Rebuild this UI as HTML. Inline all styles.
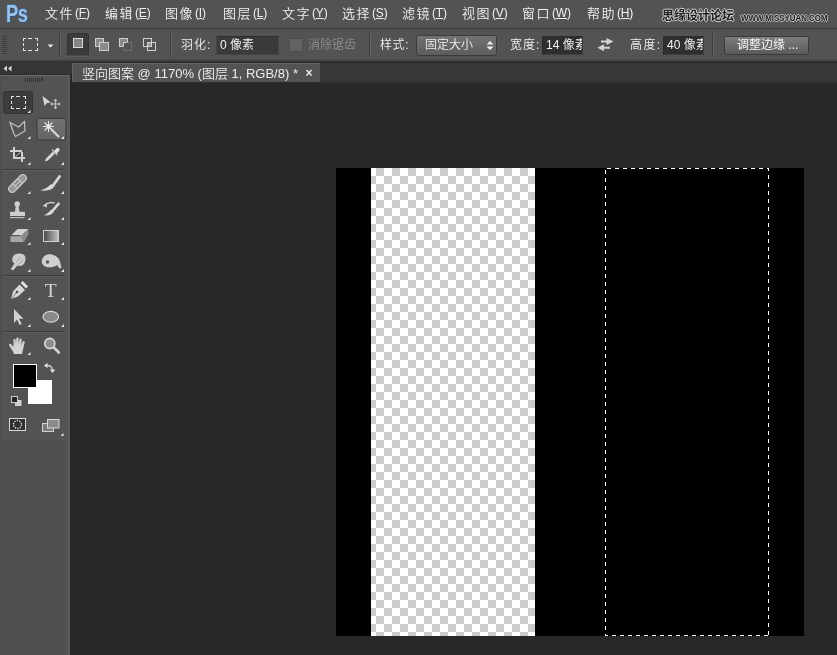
<!DOCTYPE html>
<html lang="zh-CN">
<head>
<meta charset="utf-8">
<title>竖向图案</title>
<style>
*{box-sizing:border-box;margin:0;padding:0}
html,body{width:837px;height:655px;overflow:hidden;background:#282828}
body{position:relative;font-family:"Liberation Sans","Noto Sans CJK SC",sans-serif;font-size:13px;color:#e8e8e8;font-weight:350}
.abs{position:absolute}
#menubar,#optbar,#tabbar{will-change:transform}
#menubar{left:0;top:0;width:837px;height:28px;background:#535353}
#menubar .mi{position:absolute;top:4px;height:20px;line-height:20px;font-size:13px;color:#f0f0f0;white-space:nowrap;letter-spacing:1.5px;margin-left:-1px}
#menubar .mi .k{font-size:12px;letter-spacing:-.2px;margin-left:1px;position:relative;top:-1px}
#menubar .mi u{text-decoration:underline;text-underline-offset:1px}
#logo{position:absolute;left:6px;top:1px;font-size:23.5px;font-weight:bold;color:#9cc2e6;letter-spacing:-.5px;line-height:26px;text-shadow:1px 1px 0 #2f5688,-1px 0 0 #3a6496,0 -1px 0 #41699a;transform-origin:0 0;transform:scaleX(.78)}
#wm1{position:absolute;left:662px;top:7px;font-size:12px;line-height:18px;color:#1e1e1e;font-weight:bold;white-space:nowrap;text-shadow:1px 0 0 #cfcfcf,-1px 0 0 #cfcfcf,0 1px 0 #cfcfcf,0 -1px 0 #cfcfcf}
#wm2{position:absolute;left:741px;top:13px;font-size:8.5px;line-height:10px;color:#1e1e1e;font-weight:bold;white-space:nowrap;letter-spacing:0;transform-origin:0 0;transform:scaleX(.93);text-shadow:1px 0 0 #bdbdbd,-1px 0 0 #bdbdbd,0 1px 0 #bdbdbd,0 -1px 0 #bdbdbd}
#optbar{left:0;top:28px;width:837px;height:35px;background:linear-gradient(#535353,#535353 30px,#494949 31px,#3c3c3c 32px,#2a2a2a 33px,#2a2a2a);border-top:1px solid #383838}
#optbar .lbl{position:absolute;font-size:12px;line-height:16px;color:#efefef;white-space:nowrap}
#optbar .inp{position:absolute;top:7px;height:19px;background:#3a3a3a;border:1px solid #454545;border-top-color:#2e2e2e;color:#f2f2f2;font-size:12px;line-height:17px;padding-left:3px;white-space:nowrap;overflow:hidden}
.vsep{position:absolute;top:4px;width:2px;height:24px;border-left:1px solid #3c3c3c;border-right:1px solid #626262}
#tabbar{left:72px;top:63px;width:765px;height:21px;background:linear-gradient(#393939 0,#383838 11px,#3b3b3b 14px,#383838 17px,#2c2c2c 20px,#282828 21px)}
#tab{position:absolute;left:0;top:0;width:248px;height:19px;background:#535353;border-left:1px solid #626262;border-top:1px solid #626262;font-size:13px;line-height:20px;color:#ececec;white-space:nowrap}
#tools{left:0;top:62px;width:70px;height:593px;background:#535353;border-right:1px solid #444}
#thead{position:absolute;left:0;top:0;width:72px;height:12px;background:#353535}
</style>
</head>
<body>
<div id="menubar" class="abs">
  <div id="logo">Ps</div>
  <div class="mi" style="left:46px">文件<span class="k">(<u>F</u>)</span></div>
  <div class="mi" style="left:106px">编辑<span class="k">(<u>E</u>)</span></div>
  <div class="mi" style="left:166px">图像<span class="k">(<u>I</u>)</span></div>
  <div class="mi" style="left:224px">图层<span class="k">(<u>L</u>)</span></div>
  <div class="mi" style="left:283px">文字<span class="k">(<u>Y</u>)</span></div>
  <div class="mi" style="left:343px">选择<span class="k">(<u>S</u>)</span></div>
  <div class="mi" style="left:403px">滤镜<span class="k">(<u>T</u>)</span></div>
  <div class="mi" style="left:463px">视图<span class="k">(<u>V</u>)</span></div>
  <div class="mi" style="left:523px">窗口<span class="k">(<u>W</u>)</span></div>
  <div class="mi" style="left:588px">帮助<span class="k">(<u>H</u>)</span></div>
  <div id="wm1">思缘设计论坛</div>
  <div id="wm2">WWW.MISSYUAN.COM</div>
</div>

<div id="optbar" class="abs">
  <svg class="abs" style="left:0;top:-1px" width="837" height="33" viewBox="0 28 837 33">
    <!-- gripper -->
    <g fill="#3e3e3e"><rect x="2" y="35" width="5" height="1"/><rect x="2" y="37" width="5" height="1"/><rect x="2" y="39" width="5" height="1"/><rect x="2" y="41" width="5" height="1"/><rect x="2" y="43" width="5" height="1"/><rect x="2" y="45" width="5" height="1"/><rect x="2" y="47" width="5" height="1"/><rect x="2" y="49" width="5" height="1"/><rect x="2" y="51" width="5" height="1"/><rect x="2" y="53" width="5" height="1"/></g>
    <!-- current tool: marquee -->
    <g fill="#e4e4e4" shape-rendering="crispEdges">
      <rect x="23" y="38" width="3" height="1"/><rect x="28" y="38" width="4" height="1"/><rect x="35" y="38" width="3" height="1"/>
      <rect x="23" y="50" width="3" height="1"/><rect x="28" y="50" width="4" height="1"/><rect x="35" y="50" width="3" height="1"/>
      <rect x="23" y="38" width="1" height="3"/><rect x="23" y="43" width="1" height="3"/><rect x="23" y="48" width="1" height="3"/>
      <rect x="37" y="38" width="1" height="3"/><rect x="37" y="43" width="1" height="3"/><rect x="37" y="48" width="1" height="3"/>
    </g>
    <path d="M47.5 44.5h6l-3 3z" fill="#ececec"/>
    <!-- selected mode button -->
    <rect x="67.5" y="33.5" width="21" height="22" rx="1.5" fill="#3b3b3b" stroke="#333" stroke-width="1"/>
    <rect x="68" y="55.5" width="20" height="1" fill="#666"/>
    <rect x="73.5" y="38.5" width="9" height="9" fill="#858585" stroke="#d8d8d8"/>
    <!-- add -->
    <rect x="95.5" y="38.5" width="8" height="8" fill="#8a8a8a" stroke="#d0d0d0"/>
    <rect x="99.5" y="42.5" width="9" height="8" fill="#8a8a8a" stroke="#d0d0d0"/>
    <rect x="100" y="43" width="3" height="3" fill="#8a8a8a"/>
    <!-- subtract -->
    <rect x="119.5" y="38.5" width="8" height="8" fill="#8a8a8a" stroke="#d0d0d0"/>
    <rect x="123.5" y="42.5" width="8" height="8" fill="#535353" stroke="#6e6e6e"/>
    <path d="M123.5 46.5v-4h4" fill="none" stroke="#d0d0d0"/>
    <!-- intersect -->
    <rect x="143.500" y="38.500" width="8" height="8" fill="none" stroke="#d0d0d0"/>
    <rect x="147.500" y="42.500" width="8" height="8" fill="none" stroke="#d0d0d0"/>
    <rect x="148" y="43" width="3" height="3" fill="#9a9a9a"/>
    <!-- checkbox disabled -->
    <rect x="289.500" y="38.500" width="13" height="13" rx="1" fill="#626262" stroke="#4b4b4b"/>
    <!-- style dropdown -->
    <defs><linearGradient id="btn2" x1="0" y1="0" x2="0" y2="1"><stop offset="0" stop-color="#7e7e7e"/><stop offset="1" stop-color="#5a5a5a"/></linearGradient><linearGradient id="btn" x1="0" y1="0" x2="0" y2="1"><stop offset="0" stop-color="#737373"/><stop offset="1" stop-color="#5c5c5c"/></linearGradient></defs>
    <rect x="416.500" y="35.500" width="80" height="20" rx="2" fill="url(#btn)" stroke="#3a3a3a"/>
    <path d="M486.500 44.500l3.500-3.500 3.500 3.500zM486.500 46.500l3.500 3.500 3.500-3.500z" fill="#f0f0f0"/>
    <!-- swap icon -->
    <g fill="#d2d2d2"><path d="M601 40.500h5.500v-2.500l7 3.500-7 3.500v-2.500H601z"/><path d="M610 46.700h-6v-2.500l-6.500 3.500 6.500 3.500v-2.500h6z"/></g>
    <!-- refine edge button -->
    <rect x="724.500" y="36.500" width="84" height="18" rx="2" fill="url(#btn2)" stroke="#3a3a3a"/>
  </svg>
  <div class="vsep" style="left:59px"></div>
  <div class="vsep" style="left:170px"></div>
  <div class="vsep" style="left:369px"></div>
  <div class="vsep" style="left:712px"></div>
  <div class="lbl" style="left:181px;top:8px;letter-spacing:1px">羽化:</div>
  <div class="inp" style="left:216px;width:63px">0 像素</div>
  <div class="lbl" style="left:308px;top:8px;color:#8d8d8d;font-size:12px">消除锯齿</div>
  <div class="lbl" style="left:380px;top:8px;letter-spacing:.6px">样式:</div>
  <div class="lbl" style="left:425px;top:8px">固定大小</div>
  <div class="lbl" style="left:737px;top:8px;font-size:12px;font-weight:400;color:#f6f6f6">调整边缘 ...</div>
  <div class="lbl" style="left:510px;top:8px;letter-spacing:1px">宽度:</div>
  <div class="inp" style="left:542px;width:41px;background:#2f2f2f;border-color:#2a2a2a #3e3e3e #3e3e3e #2a2a2a">14 像素</div>
  <div class="lbl" style="left:630px;top:8px;letter-spacing:1.4px">高度:</div>
  <div class="inp" style="left:663px;width:41px;background:#2f2f2f;border-color:#2a2a2a #3e3e3e #3e3e3e #2a2a2a">40 像素</div>
</div>

<div id="tabbar" class="abs">
  <div id="tab"><span style="position:absolute;left:9px;top:0">竖向图案 @ 1170% (图层 1, RGB/8) *</span><span style="position:absolute;left:232.5px;top:-1px;font-size:12px;font-weight:bold">×</span></div>
</div>

<div id="tools" class="abs">
  <div id="thead"></div>
</div>
<!--TOOLS-->
<svg class="abs" style="left:0;top:62px;will-change:transform" width="72" height="593" viewBox="0 62 72 593">
  <defs>
    <linearGradient id="gradtool" x1="0" y1="0" x2="1" y2="0"><stop offset="0" stop-color="#484848"/><stop offset="1" stop-color="#c2c2c2"/></linearGradient>
    <linearGradient id="hov" x1="0" y1="0" x2="0" y2="1"><stop offset="0" stop-color="#737373"/><stop offset="1" stop-color="#646464"/></linearGradient>
    <path id="tri" d="M0 3h3v-3z" fill="#e6e6e6"/>
  </defs>
  <rect x="0" y="440" width="67" height="215" fill="#4f4f4f"/><rect x="0" y="76" width="2" height="579" fill="#4f4f4f"/><rect x="67" y="76" width="3" height="579" fill="#595959"/>
  <!-- panel header / collapse arrows -->
  <path d="M3.500 68.500l3.500-3v6zM8 68.500l3.500-3v6z" fill="#d8d8d8"/>
  <rect x="0" y="74" width="70" height="1" fill="#2f2f2f"/>
  <rect x="0" y="75" width="70" height="1" fill="#656565"/>
  <!-- grip -->
  <g fill="#333"><rect x="25" y="78" width="1" height="4"/><rect x="27" y="78" width="1" height="4"/><rect x="29" y="78" width="1" height="4"/><rect x="31" y="78" width="1" height="4"/><rect x="33" y="78" width="1" height="4"/><rect x="35" y="78" width="1" height="4"/><rect x="37" y="78" width="1" height="4"/><rect x="39" y="78" width="1" height="4"/><rect x="41" y="78" width="2" height="3"/></g>
  <!-- separators -->
  <g><rect x="3" y="169" width="63" height="1" fill="#3d3d3d"/><rect x="3" y="170" width="63" height="1" fill="#5f5f5f"/>
     <rect x="3" y="275" width="63" height="1" fill="#3d3d3d"/><rect x="3" y="276" width="63" height="1" fill="#5f5f5f"/>
     <rect x="3" y="331" width="63" height="1" fill="#3d3d3d"/><rect x="3" y="332" width="63" height="1" fill="#5f5f5f"/></g>

  <!-- row1: marquee (selected) -->
  <rect x="3.500" y="91.500" width="29" height="22" rx="2.500" fill="#3c3c3c" stroke="#343434"/>
  <g fill="#e2e2e2" shape-rendering="crispEdges">
    <rect x="11" y="96" width="3" height="1"/><rect x="16" y="96" width="4" height="1"/><rect x="23" y="96" width="3" height="1"/>
    <rect x="11" y="108" width="3" height="1"/><rect x="16" y="108" width="4" height="1"/><rect x="23" y="108" width="3" height="1"/>
    <rect x="11" y="96" width="1" height="3"/><rect x="11" y="101" width="1" height="3"/><rect x="11" y="106" width="1" height="3"/>
    <rect x="25" y="96" width="1" height="3"/><rect x="25" y="101" width="1" height="3"/><rect x="25" y="106" width="1" height="3"/>
  </g>
  <use href="#tri" x="27.500" y="110"/>
  <!-- move -->
  <path d="M42.500 96l2 10 2.300-3 4.200-.6z" fill="#d6d6d6"/>
  <g stroke="#c6c6c6" stroke-width="1.200" fill="#c6c6c6"><path d="M51.500 104h8M55.500 100v8" fill="none"/><path d="M55.500 98.800l2 2.200h-4zM55.500 109.200l2-2.200h-4zM50.300 104l2.200-2v4zM60.700 104l-2.200-2v4z" stroke="none"/></g>

  <!-- row2: polygonal lasso -->
  <path d="M10 122.500l8.500 4.500 6-5.500.5 9.500-9.500 5.500-1.500-2.500zM15.500 136.500l-1.500-2.500-3.500-10" fill="none" stroke="#c4c4c4" stroke-width="1.200" stroke-linejoin="miter"/>
  <use href="#tri" x="27.500" y="136"/>
  <!-- wand (hover) -->
  <rect x="37" y="118.500" width="29" height="21.500" rx="2" fill="url(#hov)" stroke="#3a3a3a"/>
  <g stroke="#e4e4e4" stroke-width="1.100" fill="none"><path d="M43 126.500h11M48.500 121v11M44.500 122.500l8 8M52.500 122.500l-8 8"/></g>
  <circle cx="48.500" cy="126.500" r="2.300" fill="#e8e8e8"/>
  <path d="M51 129l8 8" stroke="#d8d8d8" stroke-width="2.200" fill="none"/>
  <use href="#tri" x="61" y="136"/>

  <!-- row3: crop -->
  <g fill="#d0d0d0"><rect x="13" y="147" width="2" height="12"/><rect x="10" y="150" width="12" height="2"/><rect x="21" y="152" width="2" height="10"/><rect x="15" y="157" width="10" height="2"/></g>
  <rect x="15" y="152" width="6" height="5" fill="#3f3f3f"/><path d="M15.500 156.500l5-4" stroke="#bdbdbd" stroke-width="1"/>
  <use href="#tri" x="27.500" y="162"/>
  <!-- eyedropper -->
  <path d="M45 161.500l1-3 7-7 2 2-7 7z" fill="#d8d8d8"/>
  <path d="M52 149.500l5.500 5.500" stroke="#bdbdbd" stroke-width="1.600"/>
  <path d="M54 151l2.500-2.500a1.800 1.800 0 0 1 2.600 2.600L56.500 153.500z" fill="#e0e0e0"/>
  <use href="#tri" x="61" y="162"/>

  <!-- row4: healing brush (bandage) -->
  <g transform="rotate(-45 17.500 183.500)"><rect x="6.500" y="180" width="22" height="7" rx="3.500" fill="#9a9a9a" stroke="#cfcfcf" stroke-width="1.100"/><rect x="13" y="180.500" width="9" height="6" fill="#bcbcbc"/><g fill="#555"><circle cx="15.500" cy="182" r=".7"/><circle cx="17.500" cy="182" r=".7"/><circle cx="19.500" cy="182" r=".7"/><circle cx="15.500" cy="185" r=".7"/><circle cx="17.500" cy="185" r=".7"/><circle cx="19.500" cy="185" r=".7"/></g></g>
  <use href="#tri" x="27.500" y="191"/>
  <!-- brush -->
  <path d="M59.500 176.500l-6 8.500" stroke="#d6d6d6" stroke-width="2.800" stroke-linecap="round"/>
  <path d="M51.300 184l3 2.300c-2 4-7.500 5-14 4 5-1.200 7-2.800 11-6.300z" fill="#dadada"/>
  <use href="#tri" x="61" y="191"/>

  <!-- row5: stamp -->
  <circle cx="17.200" cy="204" r="2.700" fill="#d0d0d0"/>
  <path d="M15.800 205.500h2.800l.9 6.500h-4.600z" fill="#c8c8c8"/>
  <rect x="10" y="211.800" width="15" height="4.200" fill="#cecece"/>
  <rect x="10" y="217" width="14.500" height="1.200" fill="#bcbcbc"/>
  <use href="#tri" x="27.500" y="217"/>
  <!-- history brush -->
  <path d="M58.500 203.800l-6 7" stroke="#d6d6d6" stroke-width="2.700" stroke-linecap="round"/>
  <path d="M51 209.800l2.600 2.200c-2 3-5.500 3.800-10.200 3.300 3.600-1 5-2.500 7.600-5.500z" fill="#dadada"/>
  <path d="M45 205c2.500-2.200 6.500-2.800 9.500-2" stroke="#cfcfcf" stroke-width="1.500" fill="none"/><path d="M42.500 205.800l4.300-2.600.2 4.200z" fill="#cfcfcf"/>
  <use href="#tri" x="61" y="217"/>

  <!-- row6: eraser -->
  <path d="M17.500 229h11l-7.500 7h-10.500z" fill="#d2d2d2"/>
  <path d="M10.500 236h10.500l3 6h-13.500z" fill="#a8a8a8"/>
  <path d="M21 236l7.500-7v5l-4.500 8z" fill="#8c8c8c"/>
  <path d="M10.500 235.700h10" stroke="#3c3c3c" stroke-width="1"/>
  <use href="#tri" x="27.500" y="242"/>
  <!-- gradient -->
  <rect x="43.500" y="230.500" width="15" height="11" fill="url(#gradtool)" stroke="#d2d2d2"/>
  <use href="#tri" x="61" y="242"/>

  <!-- row7: smudge -->
  <path d="M13 256.500c1.500-3 7-4 10.500-2 2.500 1.500 2.500 6 1 8.500-1.500 2.500-4.500 3.500-7 2.500l-4.500 5-2.200-1.500 3.700-5.500c-2.500-1.500-3-4.500-1.500-7z" fill="#cdcdcd"/>
  <path d="M16 262l5-5M18.500 264.500l5-5" stroke="#9a9a9a" stroke-width=".9"/>
  <use href="#tri" x="27.500" y="269"/>
  <!-- sponge -->
  <path d="M42 260c1-4.500 6-6.500 10-5.500 4 1 7 3.500 8 7l1.500 6-2 1-2.500-3.500c-3 2.500-8 3-11.500 1.500s-4.200-3.500-3.500-6.500z" fill="#cfcfcf"/>
  <circle cx="47.500" cy="262" r="1.700" fill="#555"/>
  <use href="#tri" x="61" y="269"/>

  <!-- row8: pen -->
  <path d="M11 299l2-7.500 6.500-7 5.500 5.500-7 6.500z" fill="#d6d6d6"/>
  <path d="M20.500 283l2.200-2 5.500 5.500-2.200 2z" fill="#e0e0e0"/>
  <circle cx="17" cy="292" r="1.300" fill="#444"/><path d="M11.500 298.500l5-6" stroke="#666" stroke-width=".8"/>
  <use href="#tri" x="27.500" y="297"/>
  <!-- T -->
  <text x="44.800" y="297" font-family="'Liberation Serif',serif" font-size="19.500" fill="#d4d4d4">T</text>
  <use href="#tri" x="61" y="297"/>

  <!-- row9: path selection -->
  <path d="M14 309v14l3-3.500 2.700 5.500 2-1-2.700-5.300h4.500z" fill="#d2d2d2"/>
  <use href="#tri" x="27.500" y="324"/>
  <!-- ellipse -->
  <ellipse cx="50.800" cy="316.800" rx="7.800" ry="5.400" fill="#8a8a8a" stroke="#dadada" stroke-width="1.100"/>
  <use href="#tri" x="61" y="324"/>

  <!-- row10: hand -->
  <path d="M14 354c-1-3-3-5.500-4.800-8.500-.6-1.200.8-2.200 1.800-1.300l2.500 2.800v-7c0-1.400 2-1.400 2.100 0l.4 4.500.3-6c.1-1.500 2.200-1.500 2.300 0l.1 6 .9-5.200c.3-1.400 2.300-1.100 2.200.3l-.5 5.700 1.400-3.500c.6-1.300 2.400-.6 2 .8-1 3.500-1.500 7-2.700 11.400z" fill="#d4d4d4"/>
  <use href="#tri" x="27.500" y="352"/>
  <!-- zoom -->
  <circle cx="49.800" cy="343.500" r="5" fill="#8c8c8c" stroke="#d0d0d0" stroke-width="1.800"/>
  <path d="M53.800 347.500l5 5" stroke="#d0d0d0" stroke-width="2.800" stroke-linecap="round"/>

  <!-- colour swatches -->
  <rect x="28" y="380" width="24" height="24" fill="#fff"/>
  <rect x="13" y="364" width="24" height="24" fill="#fff"/>
  <rect x="14" y="365" width="22" height="22" fill="#000"/>
  <!-- swap arrows -->
  <path d="M47 365.500c4 0 5.500 1.500 5.500 5" stroke="#d0d0d0" stroke-width="1.300" fill="none"/>
  <path d="M44 365.500l3.500-2.800v5.600zM52.500 373l-2.800-3.500h5.600z" fill="#dcdcdc"/>
  <!-- default colours -->
  <rect x="15" y="400" width="6.500" height="6" fill="#d0d0d0"/>
  <rect x="11.500" y="396.500" width="6" height="6" fill="#222" stroke="#cfcfcf"/>
  <!-- quick mask -->
  <rect x="9.500" y="418.500" width="16" height="12" fill="#303030" stroke="#dadada"/>
  <circle cx="17.500" cy="424.500" r="4" fill="none" stroke="#f2f2f2" stroke-width="1.300" stroke-dasharray="1.250 1.264"/>
  <!-- screen mode -->
  <rect x="42.500" y="423.500" width="11" height="8" fill="#7c7c7c" stroke="#d0d0d0"/>
  <rect x="47.500" y="419.500" width="11.500" height="8.500" fill="#8a8a8a" stroke="#d8d8d8"/>
  <use href="#tri" x="60.500" y="433"/>
</svg>
<!--/TOOLS-->

<svg class="abs" style="left:336px;top:168px" width="468" height="468" viewBox="0 0 468 468" shape-rendering="crispEdges">
  <defs>
    <pattern id="chk" x="-336" y="-168" width="16" height="16" patternUnits="userSpaceOnUse">
      <rect width="16" height="16" fill="#ffffff"/>
      <rect x="0" y="0" width="8" height="8" fill="#cccccc"/>
      <rect x="8" y="8" width="8" height="8" fill="#cccccc"/>
    </pattern>
    <pattern id="ants" width="8" height="8" patternUnits="userSpaceOnUse"><rect width="8" height="8" fill="#000"/><g fill="#fff"><rect x="7" y="0" width="1" height="1"/><rect x="0" y="0" width="3" height="1"/><rect x="6" y="1" width="2" height="1"/><rect x="0" y="1" width="2" height="1"/><rect x="5" y="2" width="3" height="1"/><rect x="0" y="2" width="1" height="1"/><rect x="4" y="3" width="4" height="1"/><rect x="3" y="4" width="4" height="1"/><rect x="2" y="5" width="4" height="1"/><rect x="1" y="6" width="4" height="1"/><rect x="0" y="7" width="4" height="1"/></g></pattern>
  </defs>
  <rect width="468" height="468" fill="#000"/>
  <rect x="35" y="0" width="164" height="468" fill="url(#chk)"/>
  <g fill="url(#ants)">
    <rect x="269" y="0" width="164" height="1"/>
    <rect x="269" y="467" width="164" height="1"/>
    <rect x="269" y="0" width="1" height="468"/>
    <rect x="432" y="0" width="1" height="468"/>
  </g>
</svg>
</body>
</html>
